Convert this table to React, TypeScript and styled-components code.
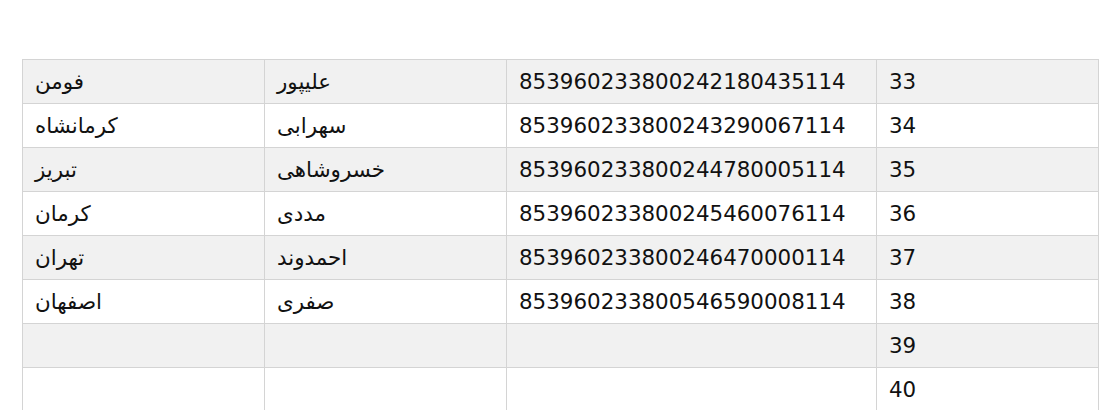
import styled, { createGlobalStyle } from 'styled-components';

const GlobalStyle = createGlobalStyle`
  body {
    margin: 0;
    background: #fff;
    font-family: "DejaVu Sans", sans-serif;
  }
`;

const rows = [
  { city: 'فومن', family: 'علیپور', code: '853960233800242180435114', index: 33 },
  { city: 'کرمانشاه', family: 'سهرابی', code: '853960233800243290067114', index: 34 },
  { city: 'تبریز', family: 'خسروشاهی', code: '853960233800244780005114', index: 35 },
  { city: 'کرمان', family: 'مددی', code: '853960233800245460076114', index: 36 },
  { city: 'تهران', family: 'احمدوند', code: '853960233800246470000114', index: 37 },
  { city: 'اصفهان', family: 'صفری', code: '853960233800546590008114', index: 38 },
  { city: '', family: '', code: '', index: 39 },
  { city: '', family: '', code: '', index: 40 },
];

const widths = [242, 242, 370, 222];

export default function App() {
  return (
    <Page>
      <GlobalStyle />
      <Table>
        <colgroup>
          {widths.map((w, i) => (
            <Col key={i} $w={w} />
          ))}
        </colgroup>
        <tbody>
          {rows.map((r) => (
            <Row key={r.index}>
              <Cell>{r.city}</Cell>
              <Cell>{r.family}</Cell>
              <Cell>{r.code}</Cell>
              <Cell>{r.index}</Cell>
            </Row>
          ))}
        </tbody>
      </Table>
    </Page>
  );
}

const Page = styled.div`
  padding: 59px 10px 0 22px;
  height: 410px;
  box-sizing: border-box;
  overflow: hidden;
`;

const Table = styled.table`
  border-collapse: collapse;
  table-layout: fixed;
  width: 1076px;
`;

const Col = styled.col<{ $w: number }>`
  width: ${(p) => p.$w}px;
`;

const Row = styled.tr`
  height: 44px;
  &:nth-child(odd) {
    background: #f1f1f1;
  }
`;

const Cell = styled.td`
  border: 1px solid #d4d4d4;
  padding: 0 12px;
  font-size: 21.4px;
  color: #111;
  text-align: left;
  white-space: nowrap;
  vertical-align: middle;
`;
